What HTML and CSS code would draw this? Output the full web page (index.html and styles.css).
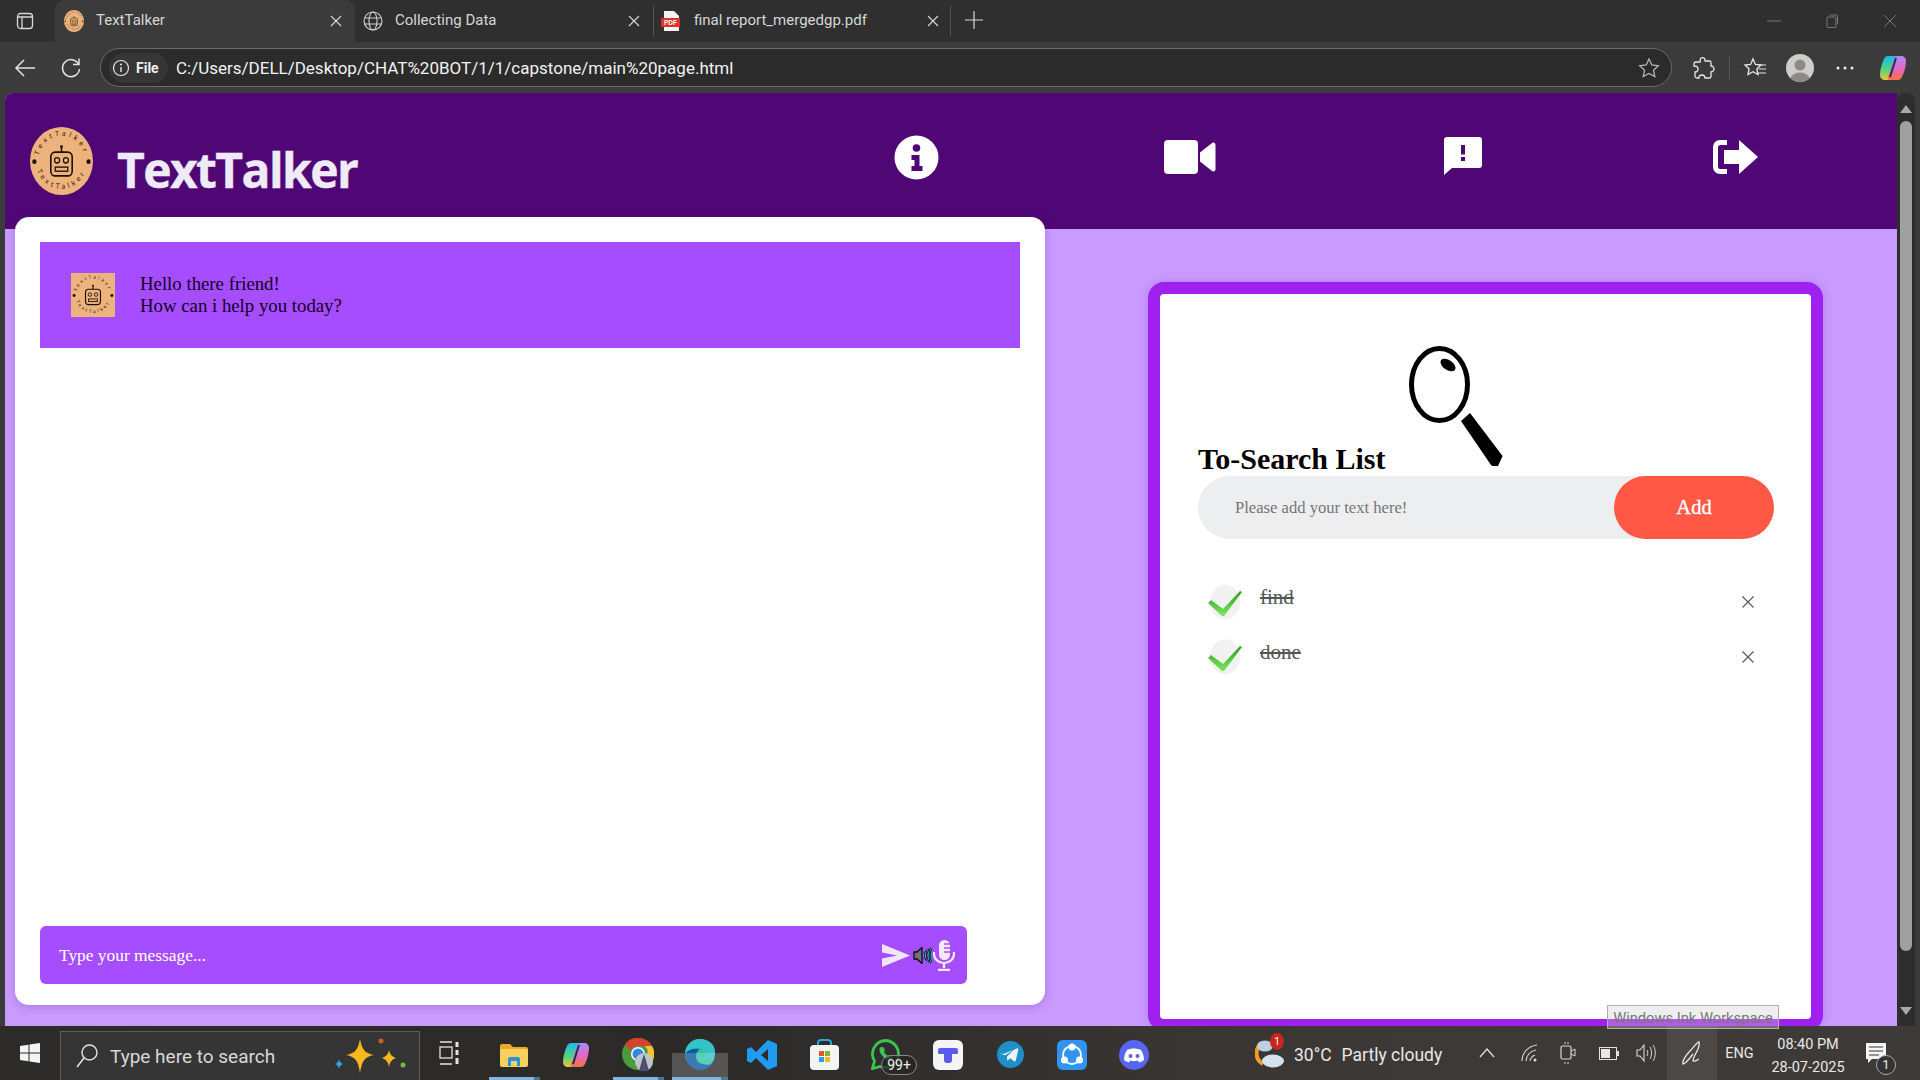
FILE: index.html
```html
<!DOCTYPE html>
<html lang="en">
<head>
<meta charset="utf-8">
<title>TextTalker</title>
<link rel="stylesheet" href="styles.css">
</head>
<body>
<svg class="defs" width="0" height="0" aria-hidden="true">
  <defs>
    <symbol id="robot" viewBox="0 0 100 100">
      <path d="M50 30v7" stroke="#1c1208" stroke-width="2.4" fill="none"/>
      <circle cx="50" cy="29" r="2.2" fill="#1c1208"/>
      <rect x="33" y="37" width="34" height="35" rx="7" fill="none" stroke="#1c1208" stroke-width="2.6"/>
      <circle cx="43" cy="49" r="4" fill="none" stroke="#1c1208" stroke-width="2"/>
      <circle cx="57" cy="49" r="4" fill="none" stroke="#1c1208" stroke-width="2"/>
      <rect x="40" y="59" width="20" height="6" fill="none" stroke="#1c1208" stroke-width="2"/>
    </symbol>
    <path id="arcTop" d="M13 50a37 37 0 0 1 74 0"/>
    <path id="arcBot" d="M9 50a41 41 0 0 0 82 0"/>
    <symbol id="bot-logo" viewBox="0 0 100 100" preserveAspectRatio="none">
      <use href="#robot" x="0" y="0" width="100" height="100"/>
      <text class="logo-ring"><textPath href="#arcTop" startOffset="50%" text-anchor="middle">TextTalker</textPath></text>
      <text class="logo-ring"><textPath href="#arcBot" startOffset="50%" text-anchor="middle">TextTalker</textPath></text>
      <circle cx="7" cy="51" r="3.4" fill="#1c1208"/>
      <circle cx="93" cy="51" r="3.4" fill="#1c1208"/>
    </symbol>
    <linearGradient id="copA" x1="0" y1="0" x2="0" y2="1">
      <stop offset="0" stop-color="#1fb6f0"/><stop offset=".55" stop-color="#4fd67a"/><stop offset="1" stop-color="#f0c23c"/>
    </linearGradient>
    <linearGradient id="copB" x1="0" y1="0" x2="0" y2="1">
      <stop offset="0" stop-color="#a98cf8"/><stop offset=".55" stop-color="#e865c0"/><stop offset="1" stop-color="#f4733c"/>
    </linearGradient>
    <symbol id="copilot" viewBox="0 0 28 28">
      <path d="M9 2h8c2 0 2.500 1 2 3L13 23c-.7 2-2 3-4 3H6c-3 0-5-2-5-5 0-5 2-12 4-16 1-2 2-3 4-3z" fill="url(#copA)"/>
      <path d="M19 26h-8c-2 0-2.500-1-2-3L15 5c.7-2 2-3 4-3h3c3 0 5 2 5 5 0 5-2 12-4 16-1 2-2 3-4 3z" fill="url(#copB)"/>
      <path d="M17 4l-6 19" stroke="#1d2f5a" stroke-width="2" fill="none"/>
    </symbol>
    <linearGradient id="checkG" x1="0" y1="0" x2="0" y2="1">
      <stop offset="0" stop-color="#2f9d22"/><stop offset="1" stop-color="#7be85a"/>
    </linearGradient>
    <pattern id="checker" width="3" height="3" patternUnits="userSpaceOnUse">
      <rect width="3" height="3" fill="#f7f7f7"/><rect width="1.500" height="1.500" fill="#ececec"/><rect x="1.500" y="1.500" width="1.500" height="1.500" fill="#ececec"/>
    </pattern>
    <symbol id="check" viewBox="0 0 36 36">
      <ellipse cx="18" cy="18" rx="15" ry="17.5" fill="url(#checker)"/>
      <path d="M1 19l3-3 12 9L33 7l2 1-18 24h-2z" fill="url(#checkG)"/>
    </symbol>
    <symbol id="cross" viewBox="0 0 14 14">
      <path d="M1.5 1.5l11 11M12.5 1.5l-11 11" stroke="#555" stroke-width="1.1" fill="none"/>
    </symbol>
    <symbol id="close-light" viewBox="0 0 12 12">
      <path d="M1 1l10 10M11 1L1 11" stroke="#d8d8d8" stroke-width="1.1" fill="none"/>
    </symbol>
  </defs>
</svg>

<header class="tabbar">
  <div class="tab-side">
    <svg width="18" height="18" viewBox="0 0 18 18"><rect x="1.5" y="1.5" width="15" height="15" rx="3" fill="none" stroke="#d8d8d8" stroke-width="1.3"/><path d="M2 5h14M6 5v11" stroke="#d8d8d8" stroke-width="1.3"/></svg>
  </div>
  <div class="tab tab-active">
    <svg class="tab-ico" width="20" height="22" viewBox="0 0 100 100" preserveAspectRatio="none"><circle cx="50" cy="50" r="50" fill="#eeb27c"/><use href="#bot-logo" width="100" height="100"/></svg>
    <span class="tab-title">TextTalker</span>
    <svg class="tab-x" width="12" height="12"><use href="#close-light"/></svg>
  </div>
  <div class="tab tab-second">
    <svg class="tab-ico" width="20" height="20" viewBox="0 0 20 20"><g fill="none" stroke="#d0d0d0" stroke-width="1.1"><circle cx="10" cy="10" r="9"/><ellipse cx="10" cy="10" rx="4" ry="9"/><path d="M1.5 7h17M1.5 13h17"/></g></svg>
    <span class="tab-title">Collecting Data</span>
    <svg class="tab-x" width="12" height="12"><use href="#close-light"/></svg>
  </div>
  <div class="tab tab-third">
    <svg class="tab-ico" width="20" height="22" viewBox="0 0 20 22"><path d="M3 1h10l5 5v15H3z" fill="#f4f4f4"/><rect x="0" y="8" width="19" height="9" rx="1" fill="#e0322c"/><text class="pdf-label" x="9.5" y="15.2" text-anchor="middle">PDF</text></svg>
    <span class="tab-title">final report_mergedgp.pdf</span>
    <svg class="tab-x" width="12" height="12"><use href="#close-light"/></svg>
  </div>
  <div class="tab-plus">
    <svg width="20" height="20" viewBox="0 0 20 20"><path d="M10 1v18M1 10h18" stroke="#d8d8d8" stroke-width="1.2"/></svg>
  </div>
  <div class="win-controls">
    <svg width="14" height="14" viewBox="0 0 14 14"><path d="M0 7h14" stroke="#777" stroke-width="1"/></svg>
    <svg width="14" height="14" viewBox="0 0 14 14"><rect x="2" y="3" width="9" height="10.500" rx="1" fill="none" stroke="#777"/><path d="M4.500 1h7a1 1 0 0 1 1 1v8" fill="none" stroke="#777"/></svg>
    <svg width="14" height="14" viewBox="0 0 14 14"><path d="M1 1l12 12M13 1L1 13" stroke="#777" stroke-width="1"/></svg>
  </div>
</header>

<nav class="toolbar">
  <div class="tool tool-back">
    <svg width="22" height="20" viewBox="0 0 22 20"><path d="M21 10H2M10 2l-8 8 8 8" fill="none" stroke="#e4e4e4" stroke-width="1.5"/></svg>
  </div>
  <div class="tool tool-reload">
    <svg width="22" height="22" viewBox="0 0 22 22"><path d="M18.500 7A8.500 8.500 0 1 0 19.500 12" fill="none" stroke="#e4e4e4" stroke-width="1.5"/><path d="M19 1.500V7.500H13" fill="none" stroke="#e4e4e4" stroke-width="1.5"/></svg>
  </div>
  <div class="address">
    <div class="site-chip">
      <svg width="18" height="18" viewBox="0 0 18 18"><circle cx="9" cy="9" r="7.500" fill="none" stroke="#e8e8e8" stroke-width="1.200"/><path d="M9 8v5" stroke="#e8e8e8" stroke-width="1.400"/><circle cx="9" cy="5.500" r="1" fill="#e8e8e8"/></svg>
      <span class="site-file">File</span>
    </div>
    <span class="url">C:/Users/DELL/Desktop/CHAT%20BOT/1/1/capstone/main%20page.html</span>
    <svg class="star" width="22" height="22" viewBox="0 0 22 22"><path d="M11 2l2.800 6 6.500.8-4.800 4.400 1.300 6.400L11 16.400l-5.800 3.200 1.300-6.400L1.700 8.800 8.200 8z" fill="none" stroke="#b4b4b4" stroke-width="1.300"/></svg>
  </div>
  <div class="tool tool-ext">
    <svg width="22" height="24" viewBox="0 0 22 24"><path d="M8 2c2-1 4 0 4 2v1h5c1 0 1 1 1 2v3c2 0 3 2 3 3s-1 3-3 3v4c0 1-1 2-2 2h-4c0-2-1-3-3-3s-3 1-3 3H4c-1 0-2-1-2-2v-4c2 0 3-1 3-3S3 10 1 10V8c0-1 1-2 2-2h4c0-2 0-3 1-4z" fill="none" stroke="#e8e8e8" stroke-width="1.300"/></svg>
  </div>
  <span class="tool-sep"></span>
  <div class="tool tool-fav">
    <svg width="24" height="22" viewBox="0 0 24 22"><path d="M10 2l2.400 5.500 5.600.6-4.100 3.800 1.100 5.600-5-2.800-5 2.800 1.100-5.600L2 8.100l5.600-.6z" fill="none" stroke="#e8e8e8" stroke-width="1.300"/><path d="M16 8h7M16 12h7M15 16h8" stroke="#e8e8e8" stroke-width="1.200"/></svg>
  </div>
  <div class="tool tool-avatar">
    <svg width="28" height="28" viewBox="0 0 28 28"><defs><clipPath id="avClip"><circle cx="14" cy="14" r="14"/></clipPath></defs><g clip-path="url(#avClip)"><rect width="28" height="28" fill="#cfcdca"/><circle cx="14" cy="11" r="5.500" fill="#8d8b88"/><ellipse cx="14" cy="26" rx="10" ry="7.500" fill="#8d8b88"/></g></svg>
  </div>
  <div class="tool tool-more">
    <svg width="18" height="4" viewBox="0 0 18 4"><circle cx="2" cy="2" r="1.500" fill="#eee"/><circle cx="9" cy="2" r="1.500" fill="#eee"/><circle cx="16" cy="2" r="1.500" fill="#eee"/></svg>
  </div>
  <div class="tool tool-copilot">
    <svg width="28" height="28"><use href="#copilot"/></svg>
  </div>
</nav>

<div class="viewport">
  <main class="page">
    <section class="app-head">
      <svg class="logo" width="63" height="68" viewBox="0 0 100 100" preserveAspectRatio="none">
        <circle cx="50" cy="50" r="50" fill="#eeb27c"/>
        <use href="#bot-logo" width="100" height="100"/>
      </svg>
      <h1 class="brand">TextTalker</h1>
      <div class="app-nav">
        <div class="nav-item">
          <svg width="45" height="45" viewBox="0 0 45 45"><circle cx="22.500" cy="22.500" r="22" fill="#fff"/><circle cx="22.500" cy="13" r="3.800" fill="#4f0776"/><path d="M17.500 20h8v11h3v5h-11v-5h3v-6h-3z" fill="#4f0776"/></svg>
        </div>
        <div class="nav-item">
          <svg width="52" height="34" viewBox="0 0 52 34"><rect width="34" height="34" rx="4" fill="#fff"/><path d="M36 12.500L48 3c2-1 3.500 0 3.500 2v24c0 2-1.500 3-3.500 2L36 21.500z" fill="#fff"/></svg>
        </div>
        <div class="nav-item nav-up">
          <svg width="38" height="38" viewBox="0 0 38 38"><path d="M3 0h32a3 3 0 0 1 3 3v25a3 3 0 0 1-3 3H8L0 38V3a3 3 0 0 1 3-3z" fill="#fff"/><rect x="17" y="8" width="4" height="9.500" fill="#4f0776"/><rect x="17" y="20" width="4" height="4" fill="#4f0776"/></svg>
        </div>
        <div class="nav-item">
          <svg width="46" height="34" viewBox="0 0 46 34"><path d="M14 0H7a7 7 0 0 0-7 7v20a7 7 0 0 0 7 7h7v-5H7.500a2.500 2.500 0 0 1-2.500-2.500V7.500A2.500 2.500 0 0 1 7.500 5H14z" fill="#fff"/><path d="M26 0l19 17-19 17V24H11V10h15z" fill="#fff"/></svg>
        </div>
      </div>
    </section>

    <section class="content">
      <article class="chat">
        <div class="messages">
          <div class="message">
            <svg class="msg-avatar" width="44" height="44" viewBox="0 0 100 100">
              <rect width="100" height="100" fill="#eeb27c"/>
              <use href="#bot-logo" width="100" height="100"/>
            </svg>
            <p class="msg-text">Hello there friend!<br>How can i help you today?</p>
          </div>
        </div>
        <form class="composer">
          <span class="composer-hint">Type your message...</span>
          <svg width="28" height="23" viewBox="0 0 28 23"><path d="M0 0l28 11.500L0 23v-8.500L15 11.500 0 8.500z" fill="#f1e6ff"/></svg>
          <svg class="ico-speaker" width="19" height="17" viewBox="0 0 19 17"><path d="M1 5h3l5-4.500v16L4 12H1z" fill="#6f7478" stroke="#0c0c0c" stroke-width="1.300"/><path d="M11.500 4.500c1.600 2.400 1.600 5.600 0 8M14 2.500c2.600 3.500 2.600 8.500 0 12M16.500 1c3 4.500 3 10.500 0 15" fill="none" stroke="#0c0c0c" stroke-width="2.600"/><path d="M11.500 4.500c1.600 2.400 1.600 5.600 0 8M14 2.500c2.600 3.500 2.600 8.500 0 12M16.500 1c3 4.500 3 10.500 0 15" fill="none" stroke="#22d0f0" stroke-width="1"/></svg>
          <svg class="ico-mic" width="22" height="31" viewBox="0 0 22 31"><rect x="6" y="0" width="11" height="20" rx="5.500" fill="#f4eaff"/><path d="M11 4h6M11 8h6M11 12h6" stroke="#a64dff" stroke-width="1.300"/><path d="M1.500 12v2a10 9 0 0 0 20 0v-2" fill="none" stroke="#f4eaff" stroke-width="2.200" transform="translate(-.5 0)"/><path d="M11 23v5M5 30h12" stroke="#f4eaff" stroke-width="2.400"/></svg>
        </form>
      </article>

      <aside class="todo">
        <div class="todo-head">
          <h2 class="todo-title">To-Search List</h2>
          <svg class="magnifier" width="94" height="120" viewBox="0 0 94 120">
            <ellipse cx="30.500" cy="38.500" rx="28" ry="36" fill="none" stroke="#000" stroke-width="5"/>
            <ellipse cx="39" cy="19" rx="8.500" ry="5" transform="rotate(35 39 19)" fill="#000"/>
            <path d="M52 75l9-8 32.600 43-4.600 10c-2 1-5 1-7-1z" fill="#000"/>
          </svg>
        </div>
        <div class="todo-input">
          <span class="todo-hint">Please add your text here!</span>
          <button class="todo-add" type="button">Add</button>
        </div>
        <ul class="todo-list">
          <li class="todo-item">
            <svg class="todo-check" width="36" height="36"><use href="#check"/></svg>
            <span class="todo-text">find</span>
            <svg class="todo-x" width="14" height="14"><use href="#cross"/></svg>
          </li>
          <li class="todo-item">
            <svg class="todo-check" width="36" height="36"><use href="#check"/></svg>
            <span class="todo-text">done</span>
            <svg class="todo-x" width="14" height="14"><use href="#cross"/></svg>
          </li>
        </ul>
      </aside>
    </section>
  </main>
  <div class="scrollbar">
    <span class="sb-up"></span>
    <span class="sb-thumb"></span>
    <span class="sb-down"></span>
  </div>
</div>

<footer class="taskbar">
  <div class="tb-start">
    <svg width="20" height="20" viewBox="0 0 20 20"><path d="M0 3l8.500-1.300V9.500H0zM9.500 1.500L20 0v9.500H9.500zM0 10.500h8.500v7.800L0 17zM9.500 10.500H20V20L9.500 18.500z" fill="#f4f4f4"/></svg>
  </div>
  <div class="tb-search">
    <svg width="24" height="26" viewBox="0 0 24 26"><circle cx="14.500" cy="9.500" r="7.500" fill="none" stroke="#e4e4e4" stroke-width="1.400"/><path d="M9 15L2 24" stroke="#e4e4e4" stroke-width="1.500"/></svg>
    <span class="tb-search-text">Type here to search</span>
    <svg class="tb-spark" width="78" height="38" viewBox="0 0 78 38"><path d="M26 2c2 10 4 14 14 16-10 2-12 6-14 18-2-12-4-16-14-18 10-2 12-6 14-16z" fill="#f5b81f"/><path d="M55 13c1 4 2 6 7 8-5 2-6 4-7 9-1-5-2-7-7-9 5-2 6-4 7-8z" fill="#f5b81f"/><circle cx="47" cy="4" r="2.500" fill="#c9612e"/><circle cx="69" cy="28" r="2.500" fill="#7fb83a"/><path d="M5 22c.7 3 1.500 4 4 5-2.500 1-3.300 2-4 5-.7-3-1.500-4-4-5 2.500-1 3.300-2 4-5z" fill="#2aa8e8"/></svg>
  </div>
  <div class="tb-taskview">
    <svg width="22" height="24" viewBox="0 0 22 24"><path d="M1 1h12M1 23h12" stroke="#e4e4e4" stroke-width="1.300"/><rect x="1" y="6" width="12" height="11" fill="none" stroke="#e4e4e4" stroke-width="1.300"/><path d="M18 1v5M18 9v5M18 17v6" stroke="#e4e4e4" stroke-width="3"/></svg>
  </div>
  <div class="tb-apps">
    <div class="tb-app tb-running">
      <svg width="28" height="24" viewBox="0 0 28 24"><path d="M0 3a2 2 0 0 1 2-2h8l3 3h13a2 2 0 0 1 2 2v3H0z" fill="#e8a92c"/><rect y="6" width="28" height="18" rx="2" fill="#f7d15e"/><path d="M8 23v-7a2 2 0 0 1 2-2h8a2 2 0 0 1 2 2v7h-3v-5h-6v5z" fill="#2f8fd8"/></svg>
    </div>
    <div class="tb-app">
      <svg width="28" height="28"><use href="#copilot"/></svg>
    </div>
    <div class="tb-app tb-running">
      <svg width="32" height="34" viewBox="0 0 32 34"><circle cx="16" cy="16" r="16" fill="#4a9b3f"/><path d="M16 0a16 16 0 0 1 14 8H16a8 8 0 0 0-8 5L3 6a16 16 0 0 1 13-6z" fill="#d9402f"/><path d="M30 8a16 16 0 0 1-14 24l7-12a8 8 0 0 0 0-12z" fill="#f5c530"/><circle cx="16" cy="16" r="7" fill="#fff"/><circle cx="16" cy="16" r="5.500" fill="#3b82e0"/><circle cx="22" cy="24" r="9" fill="#bfc3c9"/><path d="M22 16l-5 17h10z" fill="#39507a"/><path d="M21.500 24h1v9h-1z" fill="#c8302a"/></svg>
    </div>
    <div class="tb-app tb-running tb-active">
      <svg width="30" height="31" viewBox="0 0 30 31"><circle cx="15" cy="15" r="15" fill="#31c2a8"/><path d="M0 15A15 15 0 0 1 15 0c8 0 15 5 15 13 0 4-3 7-7 7h-6c3-1 4-3 4-5 0-4-4-6-8-6C7 9 3 12 0 15z" fill="#34c4c8"/><path d="M0 15c0 9 7 16 15 16 5 0 9-2 12-6-3 1-6 1-9 0-5-1-7-4-7-8 0-3 2-6 4-7C8 9 2 11 0 15z" fill="#0c59a4"/></svg>
    </div>
    <div class="tb-app">
      <svg width="30" height="30" viewBox="0 0 30 30"><path d="M21 0l9 4v22l-9 4L9 18l-5 5-4-2v-12l4-2 5 5zM21 9l-7 6 7 6z" fill="#1f9cf0"/></svg>
    </div>
    <div class="tb-app">
      <svg width="29" height="31" viewBox="0 0 29 31"><path d="M8 8V4a3 3 0 0 1 3-3h7a3 3 0 0 1 3 3v4" fill="none" stroke="#2ea3d8" stroke-width="2"/><rect y="6" width="29" height="25" rx="4" fill="#f4f4f4"/><rect x="9" y="12" width="5" height="5" fill="#e8532c"/><rect x="15" y="12" width="5" height="5" fill="#7fb82a"/><rect x="9" y="18" width="5" height="5" fill="#22a5e8"/><rect x="15" y="18" width="5" height="5" fill="#f5b81f"/></svg>
    </div>
    <div class="tb-app tb-whatsapp">
      <svg width="30" height="31" viewBox="0 0 30 31"><path d="M15 1.500A13.500 13.500 0 0 0 3.500 22L1.500 29.500l7.500-2A13.500 13.500 0 1 0 15 1.500z" fill="none" stroke="#3cc452" stroke-width="2.800"/><path d="M10 8c-2 1-2 4 0 7s5 6 8 6 4-2 4-3l-3-2-2 1c-2-1-3-3-4-4l1-2-2-3z" fill="#3cc452"/></svg>
      <span class="wa-badge">99+</span>
    </div>
    <div class="tb-app">
      <svg width="30" height="30" viewBox="0 0 30 30"><rect width="30" height="30" rx="6" fill="#f5f5f5"/><path d="M7 8h16a2 2 0 0 1 2 2v3a1 1 0 0 1-1 1h-5v6a3 3 0 0 1-3 3h-2a3 3 0 0 1-3-3v-6H6a1 1 0 0 1-1-1v-3a2 2 0 0 1 2-2z" fill="#5a5cf0"/></svg>
    </div>
    <div class="tb-app">
      <svg width="27" height="27" viewBox="0 0 27 27"><circle cx="13.500" cy="13.500" r="13.500" fill="#1f8fc8"/><path d="M5 13.500l15-6c1-.4 1.500 0 1.300 1l-2.500 11c-.2 1-1 1.200-1.700.7l-4-3-2 2c-.5.5-1 .3-1-.5v-3.500l7-6.500-9 5.500-3.300-1c-.8-.2-.8-.7.200-1.200z" fill="#eaf6fc"/></svg>
    </div>
    <div class="tb-app">
      <svg width="30" height="30" viewBox="0 0 30 30"><rect width="30" height="30" rx="6" fill="#2f95f0"/><circle cx="15" cy="15" r="9" fill="none" stroke="#fff" stroke-width="2"/><circle cx="15" cy="7" r="3.500" fill="#fff"/><circle cx="7.500" cy="20" r="3.500" fill="#fff"/><circle cx="22.500" cy="20" r="3.500" fill="#fff"/></svg>
    </div>
    <div class="tb-app">
      <svg width="30" height="30" viewBox="0 0 30 30"><circle cx="15" cy="15" r="15" fill="#5865f2"/><path d="M8 10c4-2 10-2 14 0 2 3 3 6 3 10-2 1.500-3.500 2-5 2.500l-1-2c-3 1-5 1-8 0l-1 2c-1.500-.5-3-1-5-2.500 0-4 1-7 3-10z" fill="#fff"/><circle cx="11.500" cy="16" r="2" fill="#5865f2"/><circle cx="18.500" cy="16" r="2" fill="#5865f2"/></svg>
    </div>
  </div>
  <div class="tb-weather">
    <span class="tb-weather-ico">
      <svg width="31" height="34" viewBox="0 0 31 34"><path d="M8 28a12 12 0 0 1-2-20" fill="none" stroke="#f0a020" stroke-width="4"/><ellipse cx="10" cy="10" rx="8" ry="5.500" fill="#bcd0e4"/><ellipse cx="18" cy="25" rx="11" ry="6.500" fill="#d4e2ee"/></svg>
      <span class="weather-badge">1</span>
    </span>
    <span class="tb-temp">30°C</span>
    <span class="tb-cond">Partly cloudy</span>
  </div>
  <div class="tray tray-chev"><svg width="16" height="10" viewBox="0 0 16 10"><path d="M1 9l7-8 7 8" fill="none" stroke="#e4e4e4" stroke-width="1.200"/></svg></div>
  <div class="tray tray-wifi"><svg width="18" height="18" viewBox="0 0 18 18"><path d="M1 17C1 9 7 2 16 1M5 17c0-5 4-10 10-11M9 17c0-2 2-5 5-6" fill="none" stroke="#d8d8d8" stroke-width="1.100"/><circle cx="14" cy="16" r="1.500" fill="#d8d8d8"/></svg></div>
  <div class="tray tray-cam"><svg width="16" height="24" viewBox="0 0 16 24"><path d="M4 2h6M4 22h6" stroke="#d8d8d8" stroke-width="1.200" stroke-dasharray="2 1"/><rect x="1" y="5" width="10" height="13" rx="1.500" fill="none" stroke="#d8d8d8" stroke-width="1.200"/><path d="M11 10l4-2v7l-4-2" fill="none" stroke="#d8d8d8"/></svg></div>
  <div class="tray tray-batt"><svg width="20" height="13" viewBox="0 0 20 13"><rect x=".5" y=".5" width="17" height="12" fill="none" stroke="#e4e4e4"/><rect x="2" y="2" width="9" height="9" fill="#e8e8e8"/><rect x="18" y="4" width="2" height="5" fill="#e4e4e4"/></svg></div>
  <div class="tray tray-sound"><svg width="20" height="20" viewBox="0 0 20 20"><path d="M1 7h3l4-5v16l-4-5H1z" fill="none" stroke="#d8d8d8" stroke-width="1.100"/><path d="M11 7c1 2 1 4 0 6M14 4c2 3 2 9 0 12M17 2c3 4 3 12 0 16" fill="none" stroke="#d8d8d8"/></svg></div>
  <div class="tray tray-ink"><svg width="22" height="26" viewBox="0 0 22 26"><path d="M12 14C9 18 4 24 2 24c-1-3 3-9 7-13 3-3 7-9 9-9 1 2-1 8-3 11-1 2-3 5-3 8 2 1 4-1 6-2" fill="none" stroke="#e8e8e8" stroke-width="1.300"/></svg></div>
  <div class="tray tray-lang">ENG</div>
  <div class="tray tray-clock"><span>08:40 PM</span><span>28-07-2025</span></div>
  <div class="tray tray-notif">
    <svg width="20" height="20" viewBox="0 0 20 20"><path d="M0 0h20v16H6l-4 4v-4H0z" fill="#f4f4f4"/><path d="M3 4h14M3 8h14M3 12h10" stroke="#333" stroke-width="1"/></svg>
    <span class="notif-badge">1</span>
  </div>
  <div class="ink-tip">Windows Ink Workspace</div>
</footer>
</body>
</html>
```

FILE: styles.css
```css
* { box-sizing: border-box; }

html, body { margin: 0; padding: 0; }

body {
  width: 1920px;
  height: 1080px;
  overflow: hidden;
  display: flex;
  flex-direction: column;
  position: relative;
  background: #3b3b3b;
  font-family: "Liberation Serif", serif;
}

.defs { position: absolute; }

.logo-ring {
  font-family: "Noto Sans", sans-serif;
  font-size: 10.500px;
  letter-spacing: 5px;
  fill: #1c1208;
}

/* ---------- browser tabs ---------- */
.tabbar {
  height: 42px;
  flex: none;
  display: flex;
  align-items: stretch;
  background: #2f2f2f;
  font-family: Roboto, sans-serif;
  font-size: 15px;
  color: #d6d6d6;
}

.tab-side {
  width: 55px;
  padding-left: 16px;
  display: flex;
  align-items: center;
}

.tab {
  display: flex;
  align-items: center;
}

.tab-active {
  width: 300px;
  padding: 0 13px 0 9px;
  background: #3b3b3b;
  border-top-left-radius: 10px;
  border-top-right-radius: 10px;
}

.tab-second {
  width: 299px;
  padding: 0 13px 0 8px;
  border-right: 1px solid #555;
  height: 30px;
  align-self: center;
}

.tab-third {
  width: 297px;
  padding: 0 11px 0 7px;
  border-right: 1px solid #555;
  height: 30px;
  align-self: center;
}

.tab-ico { flex: none; }

.tab-title {
  flex: 1;
  margin: 0 0 2px 12px;
  white-space: nowrap;
}

.tab-third .tab-title { margin-left: 13px; }

.pdf-label {
  font-family: "Liberation Sans", sans-serif;
  font-size: 6.500px;
  font-weight: 700;
  fill: #fff;
}

.tab-x { flex: none; }

.tab-plus {
  width: 46px;
  padding-bottom: 2px;
  display: flex;
  align-items: center;
  justify-content: center;
}

.win-controls {
  margin-left: auto;
  width: 153px;
  padding: 0 23px 0 0;
  display: flex;
  align-items: center;
  justify-content: space-between;
}

/* ---------- browser toolbar ---------- */
.toolbar {
  height: 51px;
  flex: none;
  display: flex;
  align-items: center;
  background: #3b3b3b;
  font-family: Roboto, sans-serif;
  color: #efefef;
}

.tool {
  display: flex;
  align-items: center;
  justify-content: center;
  flex: none;
}

.tool-back { width: 49px; }
.tool-reload { width: 44px; margin-right: 7px; }

.address {
  width: 1572px;
  height: 39px;
  flex: none;
  display: flex;
  align-items: center;
  padding: 0 8px 0 8px;
  background: #2b2b2b;
  border: 1px solid #6a6a6a;
  border-radius: 20px;
}

.site-chip {
  width: 59px;
  height: 30px;
  display: flex;
  align-items: center;
  gap: 6px;
  padding-left: 3px;
  background: #363636;
  border-radius: 15px;
}

.site-file {
  font-size: 14px;
  font-weight: 700;
}

.url {
  margin-left: 8px;
  flex: 1;
  font-size: 17px;
  white-space: nowrap;
  color: #f2f2f2;
}

.star { flex: none; margin-right: 3px; }

.tool-ext { width: 50px; margin-left: 7px; }

.tool-sep {
  width: 1px;
  height: 26px;
  background: #555;
  flex: none;
}

.tool-fav { width: 50px; }
.tool-avatar { width: 40px; }
.tool-more { width: 50px; }
.tool-copilot { width: 46px; }

/* ---------- page ---------- */
.viewport {
  height: 933px;
  flex: none;
  display: flex;
  padding-left: 5px;
}

.page {
  width: 1892px;
  display: flex;
  flex-direction: column;
  overflow: hidden;
  background: #c99bff;
  border-top-left-radius: 8px;
}

.app-head {
  height: 136px;
  flex: none;
  display: flex;
  align-items: flex-start;
  padding: 34px 25px 0 25px;
  background: #4f0776;
}

.logo { flex: none; }

.brand {
  margin: 13px 0 0 24px;
  font-family: "Open Sans", sans-serif;
  font-size: 48px;
  line-height: 60px;
  font-weight: 700;
  letter-spacing: -1.600px;
  color: #efeaf8;
  -webkit-text-stroke: .4px #efeaf8;
}

.app-nav {
  margin-left: auto;
  width: 1092px;
  height: 60px;
  display: grid;
  grid-template-columns: repeat(4, 1fr);
  align-items: center;
  justify-items: center;
}

.nav-item { display: flex; }
.nav-up { margin-bottom: 2px; }

.content {
  flex: 1;
  min-height: 0;
  display: flex;
  align-items: flex-start;
  padding-left: 10px;
}

/* ---------- chat ---------- */
.chat {
  width: 1030px;
  height: 788px;
  flex: none;
  margin-top: -12px;
  display: flex;
  flex-direction: column;
  padding: 25px 25px 21px 25px;
  background: #fff;
  border-radius: 14px;
  box-shadow: 0 2px 10px rgba(80, 20, 140, .25);
}

.messages { flex: 1; }

.message {
  height: 106px;
  display: flex;
  align-items: center;
  padding-left: 31px;
  background: #a64dff;
}

.msg-avatar { flex: none; }

.msg-text {
  margin: 0 0 0 25px;
  font-size: 18.800px;
  line-height: 22px;
  color: #12002a;
}

.composer {
  width: 927px;
  height: 58px;
  flex: none;
  display: flex;
  align-items: center;
  padding: 0 12px 0 19px;
  background: #a64dff;
  border-radius: 6px;
}

.composer-hint {
  flex: 1;
  font-size: 17.400px;
  color: #fff;
}

.ico-speaker { margin-left: 3px; }
.ico-mic { margin-left: 1px; }

/* ---------- to-search list ---------- */
.todo {
  width: 675px;
  height: 749px;
  flex: none;
  margin: 53px 0 0 103px;
  padding: 52px 37px 0 38px;
  background: #fff;
  border: 12px solid #a020f0;
  border-radius: 16px;
  box-shadow: 0 0 10px rgba(120, 40, 200, .25);
}

.todo-head {
  display: flex;
  align-items: flex-end;
}

.todo-title {
  margin: 0;
  font-size: 30px;
  line-height: 34px;
  font-weight: 700;
  color: #000;
}

.magnifier {
  margin: 0 0 10px 23px;
  flex: none;
}

.todo-input {
  height: 63px;
  display: flex;
  align-items: center;
  padding-left: 37px;
  background: #edeef0;
  border-radius: 32px;
}

.todo-hint {
  flex: 1;
  font-size: 16.600px;
  color: #757575;
}

.todo-add {
  width: 160px;
  height: 63px;
  border: 0;
  border-radius: 32px;
  background: #ff5945;
  color: #fff;
  font-family: inherit;
  font-size: 20.500px;
  font-weight: 400;
  -webkit-text-stroke: .35px #fff;
}

.todo-list {
  margin: 35px 0 0;
  padding: 0;
  list-style: none;
}

.todo-item {
  height: 55px;
  display: flex;
  align-items: center;
  padding-left: 9px;
}

.todo-check { flex: none; }

.todo-text {
  flex: 1;
  margin: 0 0 9px 17px;
  font-size: 21px;
  color: #555;
  text-decoration: line-through;
}

.todo-x { flex: none; margin-right: 19px; }

/* ---------- scrollbar ---------- */
.scrollbar {
  width: 18px;
  flex: none;
  display: flex;
  flex-direction: column;
  align-items: flex-start;
  padding: 12px 0 11px 3px;
  background: #2d2d2d;
  border-radius: 8px 8px 0 0;
}

.sb-up, .sb-down {
  width: 0;
  height: 0;
  border-left: 6px solid transparent;
  border-right: 6px solid transparent;
  flex: none;
}

.sb-up { border-bottom: 8px solid #a8a8a8; }
.sb-down { border-top: 8px solid #a8a8a8; margin-top: auto; }

.sb-thumb {
  width: 12px;
  height: 830px;
  margin-top: 8px;
  background: #a0a0a0;
  border-radius: 6px;
}

/* ---------- taskbar ---------- */
.taskbar {
  height: 54px;
  flex: none;
  position: relative;
  display: flex;
  align-items: center;
  background: linear-gradient(90deg, #2d2c2b 0%, #2b2a29 35%, #3c3835 70%, #3e3a37 100%);
  font-family: Roboto, sans-serif;
  color: #e8e8e8;
}

.tb-start {
  width: 60px;
  padding-left: 20px;
  flex: none;
  display: flex;
}

.tb-search {
  width: 360px;
  height: 49px;
  margin-top: 5px;
  flex: none;
  display: flex;
  align-items: center;
  padding-left: 14px;
  background: #353535;
  border: 1px solid #5c5c5c;
  border-bottom: 0;
}

.tb-search-text {
  margin-left: 11px;
  font-size: 19px;
  color: #d8d8d8;
  white-space: nowrap;
}

.tb-spark { margin-left: auto; margin-right: 7px; }

.tb-taskview {
  width: 60px;
  flex: none;
  display: flex;
  justify-content: center;
}

.tb-apps {
  display: flex;
  margin-left: 3px;
  flex: none;
  align-self: stretch;
}

.tb-app {
  width: 62px;
  padding-top: 3px;
  position: relative;
  display: flex;
  align-items: center;
  justify-content: center;
}

.tb-running::after {
  content: "";
  position: absolute;
  left: 6px;
  bottom: 0;
  width: 51px;
  height: 3px;
  background: linear-gradient(90deg, #7fb5e0 88%, #4f7590 88%);
}

.tb-active::before {
  content: "";
  position: absolute;
  left: 3px;
  right: 3px;
  top: 27px;
  bottom: 3px;
  background: rgba(255, 255, 255, .2);
  z-index: 1;
}

.tb-active::after {
  left: 3px;
  width: 56px;
}

.wa-badge {
  position: absolute;
  left: 26px;
  top: 29px;
  width: 36px;
  height: 20px;
  border: 1px solid #888;
  border-radius: 10px;
  background: rgba(40, 38, 36, .8);
  font-size: 14px;
  line-height: 18px;
  text-align: center;
  color: #f0f0f0;
}

.tb-weather {
  width: 210px;
  margin-left: 90px;
  flex: none;
  display: flex;
  align-items: center;
  font-size: 17.500px;
  white-space: nowrap;
}

.tb-weather-ico {
  position: relative;
  display: flex;
  width: 39px;
}

.weather-badge {
  position: absolute;
  left: 15px;
  top: -3px;
  width: 14px;
  height: 17px;
  border-radius: 50%;
  background: #c8261e;
  font-size: 10px;
  line-height: 17px;
  text-align: center;
  color: #fff;
}

.tb-temp, .tb-cond { padding-top: 4px; }
.tb-cond { margin-left: 10px; }

.tray {
  flex: none;
  display: flex;
  align-items: center;
  justify-content: center;
  align-self: stretch;
}

.tray-chev { width: 43px; }
.tray-wifi { width: 44px; }
.tray-cam { width: 31px; }
.tray-batt { width: 51px; }
.tray-sound { width: 24px; margin-right: 9px; }
.tray-ink { width: 50px; background: #4b4845; }
.tray-lang { width: 45px; font-size: 14.500px; }

.tray-clock {
  width: 91px;
  flex-direction: column;
  gap: 6px;
  padding: 5px 0 0 1px;
  font-size: 14.500px;
}

.tray-notif { width: 45px; position: relative; }

.notif-badge {
  position: absolute;
  left: 23px;
  top: 29px;
  width: 20px;
  height: 20px;
  border: 1px solid #aaa;
  border-radius: 50%;
  background: #333;
  font-size: 13px;
  line-height: 18px;
  text-align: center;
  color: #eee;
}

.ink-tip {
  position: absolute;
  left: 1607px;
  top: -21px;
  width: 172px;
  height: 24px;
  border: 1px solid #b0b0b0;
  background: rgba(205, 205, 205, .35);
  font-size: 14.700px;
  line-height: 24px;
  text-align: center;
  color: #787878;
  white-space: nowrap;
}
```
